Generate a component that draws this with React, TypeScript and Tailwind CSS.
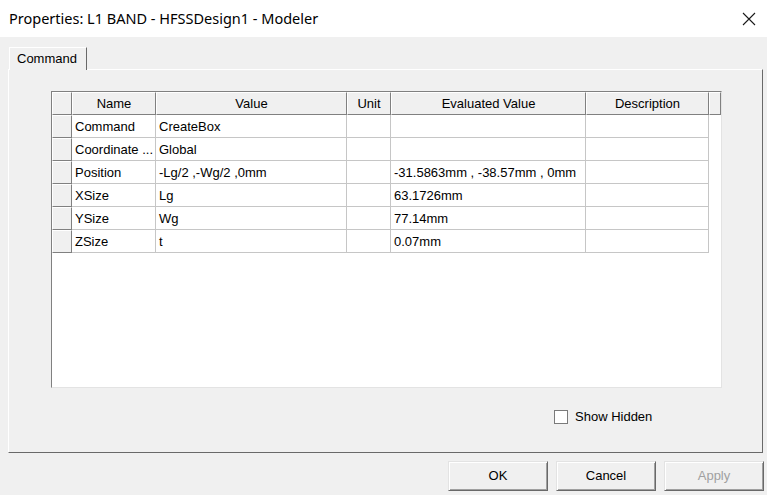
import React from 'react';

const columns = ['Name', 'Value', 'Unit', 'Evaluated Value', 'Description'];

const rows = [
  { name: 'Command', value: 'CreateBox', unit: '', evaluated: '', description: '' },
  { name: 'Coordinate ...', value: 'Global', unit: '', evaluated: '', description: '' },
  { name: 'Position', value: '-Lg/2 ,-Wg/2 ,0mm', unit: '', evaluated: '-31.5863mm , -38.57mm , 0mm', description: '' },
  { name: 'XSize', value: 'Lg', unit: '', evaluated: '63.1726mm', description: '' },
  { name: 'YSize', value: 'Wg', unit: '', evaluated: '77.14mm', description: '' },
  { name: 'ZSize', value: 't', unit: '', evaluated: '0.07mm', description: '' },
];

const HeaderCell: React.FC<{ children?: React.ReactNode }> = ({ children }) => (
  <div className="h-[23px] bg-[#f0f0f0] border-t border-l border-t-white border-l-white border-r border-b border-r-[#808080] border-b-[#808080] flex items-center justify-center text-[#000] leading-none">
    {children}
  </div>
);

const BodyCell: React.FC<{ children?: React.ReactNode }> = ({ children }) => (
  <div className="h-[23px] bg-white border-r border-b border-[#c6c6c6] flex items-center pl-[3px] whitespace-nowrap overflow-hidden leading-none">
    {children}
  </div>
);

const RowHead: React.FC = () => (
  <div className="h-[23px] bg-[#f0f0f0] border-t border-l border-t-white border-l-white border-r border-b border-r-[#808080] border-b-[#808080]" />
);

const DialogButton: React.FC<{ label: string; disabled?: boolean }> = ({ label, disabled }) => (
  <button
    className={`w-[100px] h-[30px] bg-[#f0f0f0] border border-t-[#e3e3e3] border-l-[#e3e3e3] border-r-[#696969] border-b-[#696969] shadow-[inset_1px_1px_0_#ffffff,inset_-1px_-1px_0_#a0a0a0] ${disabled ? 'text-[#a0a0a0]' : 'text-black'}`}
  >
    {label}
  </button>
);

export default function App() {
  return (
    <div
      className="w-[767px] h-[495px] bg-[#f0f0f0] flex flex-col overflow-hidden text-[13px] text-black"
      style={{ fontFamily: '"Liberation Sans", Arial, sans-serif' }}
    >
      {/* title bar */}
      <div className="h-[37px] bg-white flex items-center justify-between pl-[9px] pr-[10px] shrink-0">
        <span className="text-[14.5px] text-black" style={{ fontFamily: '"Noto Sans", "Open Sans", sans-serif' }}>
          Properties: L1 BAND - HFSSDesign1 - Modeler
        </span>
        <svg width="14" height="14" viewBox="0 0 14 14" className="mr-[1px]">
          <path d="M1 1 L13 13 M13 1 L1 13" stroke="#1a1a1a" strokeWidth="1.1" fill="none" />
        </svg>
      </div>

      {/* tabs */}
      <div className="pl-[8px] pr-[4px] pt-[9px] flex flex-col">
        <div className="flex">
          <div className="ml-[1px] w-[78px] h-[23px] bg-[#f0f0f0] border-t border-l border-t-white border-l-white border-r border-r-[#696969] flex items-center pl-[7px] relative top-[1px] z-10">
            Command
          </div>
        </div>
        <div className="h-[384px] border-t border-l border-t-white border-l-white border-r border-b border-r-[#696969] border-b-[#696969] flex flex-col">
          {/* grid */}
          <div className="ml-[42px] mt-[21px] w-[671px] h-[297px] bg-white border-t border-l border-t-[#808080] border-l-[#808080] border-r border-b border-r-[#e3e3e3] border-b-[#e3e3e3]">
            <div className="grid grid-cols-[20px_84px_191px_44px_195px_123px_12px]">
              <HeaderCell />
              {columns.map(c => (
                <HeaderCell key={c}>{c}</HeaderCell>
              ))}
              <HeaderCell />
              {rows.map(r => (
                <React.Fragment key={r.name}>
                  <RowHead />
                  <BodyCell>{r.name}</BodyCell>
                  <BodyCell>{r.value}</BodyCell>
                  <BodyCell>{r.unit}</BodyCell>
                  <BodyCell>{r.evaluated}</BodyCell>
                  <BodyCell>{r.description}</BodyCell>
                  <div className="h-[23px] bg-white" />
                </React.Fragment>
              ))}
            </div>
          </div>

          {/* show hidden */}
          <div className="flex items-center mt-[19px] ml-[545px] gap-[7px]">
            <div className="w-[14px] h-[14px] bg-white border border-[#7a7a7a]" />
            <span>Show Hidden</span>
          </div>
        </div>
      </div>

      {/* buttons */}
      <div className="flex justify-end gap-[8px] pr-[3px] mt-[8px]">
        <DialogButton label="OK" />
        <DialogButton label="Cancel" />
        <DialogButton label="Apply" disabled />
      </div>
    </div>
  );
}
